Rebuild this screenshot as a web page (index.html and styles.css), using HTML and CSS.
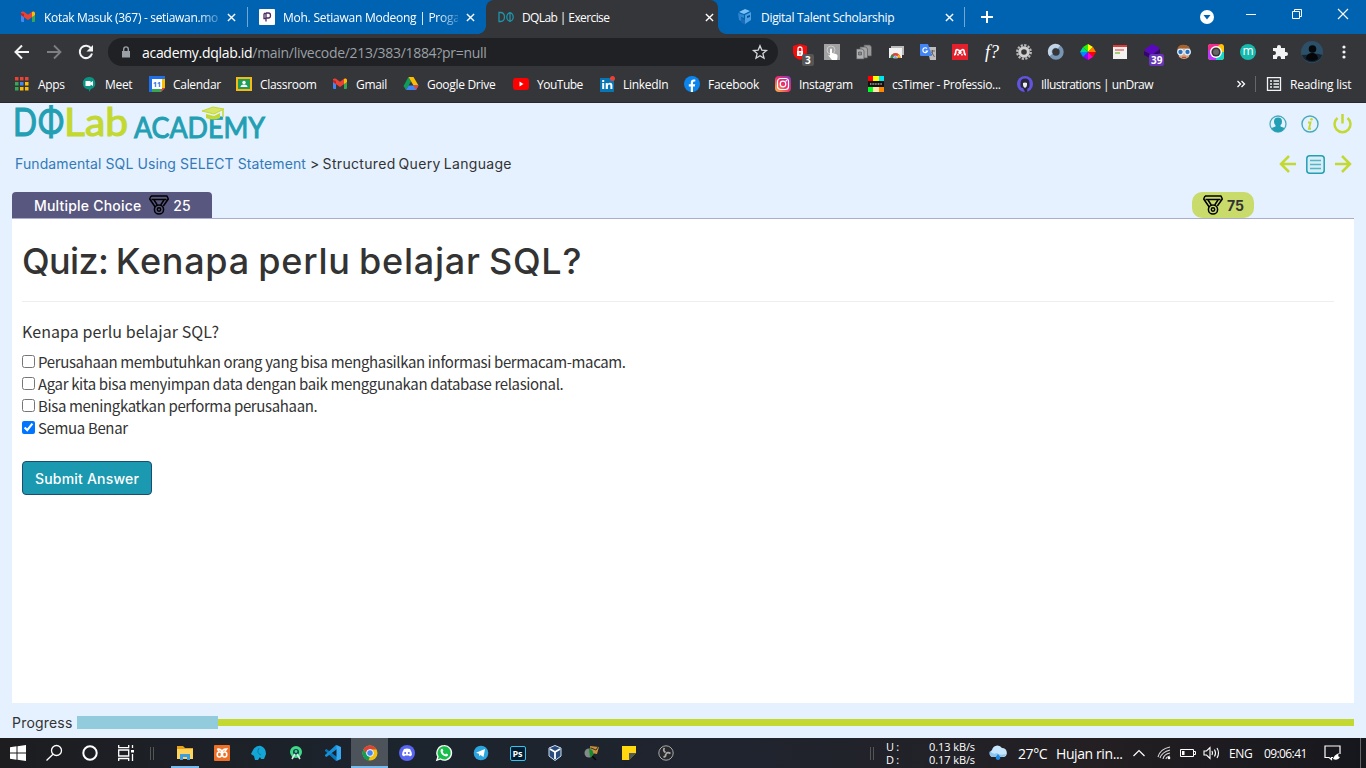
FILE: index.html
```
<!DOCTYPE html>
<html lang="id">
<head>
<meta charset="utf-8">
<title>DQLab | Exercise</title>
<link rel="stylesheet" href="styles.css">
</head>
<body>
<header class="browser">
  <div class="tabs">
    <div class="tab tab-mail">
      <svg class="ico" viewBox="0 0 16 16"><path d="M1 3h3v10H2a1 1 0 0 1-1-1z" fill="#4285f4"/><path d="M12 3h3v9a1 1 0 0 1-1 1h-2z" fill="#34a853"/><path d="M1 4a2 2 0 0 1 3-1.3l4 3.1 4-3.1A2 2 0 0 1 15 4v2L8 11 1 6z" fill="#ea4335"/><path d="M12 3a2 2 0 0 1 3 1v2l-3 2z" fill="#fbbc04"/><path d="M1 4l3 1v3L1 6z" fill="#c5221f"/></svg>
      <span class="tab-title fade t1">Kotak Masuk (367) - setiawan.mo</span>
      <svg class="x" viewBox="0 0 10 10"><path d="M1 1l8 8M9 1L1 9"/></svg>
    </div>
    <div class="tab tab-prog">
      <svg class="ico" viewBox="0 0 16 16"><rect width="16" height="16" rx="1" fill="#fff"/><path d="M5 4.500v5h2M5 4.500l2 0v8M7 4h2.500q2 0 2 2.500t-2 2.500H7" fill="none" stroke="#4b2a63" stroke-width="1.300"/></svg>
      <span class="tab-title fade t2">Moh. Setiawan Modeong | Proga</span>
      <svg class="x" viewBox="0 0 10 10"><path d="M1 1l8 8M9 1L1 9"/></svg>
    </div>
    <div class="tab tab-active">
      <svg class="ico" viewBox="0 0 16 16" fill="none" stroke="#1f93a7" stroke-width="1.300"><path d="M1 3.500h1.500q4 0 4 4.500t-4 4.500H1z"/><ellipse cx="12" cy="8" rx="3.200" ry="4"/><path d="M12 3v10"/></svg>
      <span class="tab-title t3">DQLab | Exercise</span>
      <svg class="x" viewBox="0 0 10 10"><path d="M1 1l8 8M9 1L1 9"/></svg>
    </div>
    <div class="tab tab-dts">
      <svg class="ico" viewBox="0 0 16 16"><path d="M2 3l6-3 5 2-6 3z" fill="#7fc0f2"/><path d="M1 4l6 2v3L4 8v4L2 11z" fill="#2e86d1"/><path d="M8 6l6-3v8l-6 4z" fill="#4ba0e4"/><path d="M10 7l3-1v2l-3 1z" fill="#0c4f96"/><path d="M4 9l4 2v5l-4-3z" fill="#1b6bb6"/></svg>
      <span class="tab-title">Digital Talent Scholarship</span>
      <svg class="x" viewBox="0 0 10 10"><path d="M1 1l8 8M9 1L1 9"/></svg>
    </div>
    <svg class="plus" viewBox="0 0 12 12"><path d="M6 0v12M0 6h12" stroke="#fff" stroke-width="2"/></svg>
    <div class="window-buttons">
      <svg class="media" width="14" height="14" viewBox="0 0 14 14"><circle cx="7" cy="7" r="7" fill="#fff"/><path d="M3.500 5h7L7 9.500z" fill="#0063b1"/></svg>
      <svg width="10" height="10" viewBox="0 0 10 10"><path d="M0 5.500h10" stroke="#fff"/></svg>
      <svg width="10" height="10" viewBox="0 0 10 10" fill="none" stroke="#fff"><path d="M.5 2.500h7v7h-7zM2.500 2.500v-2h7v7h-2"/></svg>
      <svg width="10" height="10" viewBox="0 0 10 10"><path d="M0 0l10 10M10 0L0 10" stroke="#fff" stroke-width="1.100"/></svg>
    </div>
  </div>

  <div class="toolbar">
    <div class="nav">
      <svg viewBox="0 0 16 16"><path d="M15 8H2M8 1.500L1.500 8 8 14.500" fill="none" stroke="#f1f3f4" stroke-width="2"/></svg>
      <svg viewBox="0 0 16 16"><path d="M1 8h13M8 1.500L14.500 8 8 14.500" fill="none" stroke="#7d7f83" stroke-width="1.800"/></svg>
      <svg viewBox="0 0 16 16"><path d="M13.200 4.500A6.200 6.200 0 1 0 14 9.500" fill="none" stroke="#f1f3f4" stroke-width="2"/><path d="M15 1v6.500H8.500z" fill="#f1f3f4"/></svg>
    </div>
    <div class="address">
      <svg class="lock" viewBox="0 0 10 12"><path d="M1 5h8v6.500H1z" fill="#9aa0a6"/><path d="M2.700 5V3.200a2.300 2.300 0 0 1 4.600 0V5" fill="none" stroke="#9aa0a6" stroke-width="1.400"/></svg>
      <span class="url"><span class="host">academy.dqlab.id</span><span class="path">/main/livecode/213/383/1884?pr=null</span></span>
      <svg class="star" viewBox="0 0 16 16"><path d="M8 1.800l1.800 4.300 4.700.4-3.600 3.100 1.100 4.600L8 11.700l-4 2.500 1.100-4.600L1.500 6.500l4.700-.4z" fill="none" stroke="#d5d7da" stroke-width="1.300"/></svg>
    </div>
    <div class="extensions">
      <div class="ext"><svg viewBox="0 0 16 16"><path d="M8 0l7 2v6q0 5-7 8Q1 13 1 8V2z" fill="#f20d0d"/><path d="M5 7h6v5H5z" fill="#fff"/><path d="M6 7V5a2 2 0 0 1 4 0v2" fill="none" stroke="#fff" stroke-width="1.300"/><path d="M8 8.500v2" stroke="#f20d0d"/></svg><b class="badge gray">3</b></div>
      <div class="ext"><svg viewBox="0 0 16 16"><path d="M0 0h16v16H0z" fill="#a3a3a3"/><circle cx="7" cy="6" r="4" fill="none" stroke="#ccc"/><path d="M6 5q1-1 2 0v4l4 1q2 .5 1.500 3L13 16H8l-4-5 2 .5z" fill="#fff"/></svg></div>
      <div class="ext"><svg viewBox="0 0 16 16" stroke="#55575a" stroke-width=".7"><path d="M8 1h6l1.500 2v9H8z" fill="#999"/><path d="M4 3h6l1.500 2v9H4z" fill="#a6a6a6"/><path d="M.5 5h6L8 7v8H.5z" fill="#b0b0b0"/><path d="M2.500 8h3v3h-3z" fill="#888"/></svg></div>
      <div class="ext"><svg viewBox="0 0 16 16"><path d="M3 2h13v9H3z" fill="#bbb"/><path d="M1 4h13v10H1z" fill="#f3f3f3"/><path d="M2.500 14a5 5 0 0 1 10 0z" fill="#db4437"/><path d="M2.500 14a5 5 0 0 1 1.500-3.500L7 13z" fill="#0f9d58"/><path d="M8 13l3-2.500q1.500 1.500 1.500 3.500z" fill="#f4b400"/><path d="M5.500 14a2 2 0 0 1 4 0z" fill="#4285f4" stroke="#fff" stroke-width=".6"/></svg></div>
      <div class="ext"><svg viewBox="0 0 16 16"><path d="M7 3h9v13h-6z" fill="#bdbdbd"/><path d="M0 0h8l4 12H1q-1 0-1-1z" fill="#4285f4"/><path d="M7 4.500A2.400 2.400 0 1 0 7.500 7H5.500" fill="none" stroke="#fff" stroke-width="1.200"/><path d="M10.500 7H15M12.500 6v1q0 3-1 4M11.500 8l3 5" fill="none" stroke="#666"/></svg></div>
      <div class="ext"><svg viewBox="0 0 16 16"><path d="M0 0h16v16H0z" fill="#e4202c"/><path d="M2 10.700q1.700 0 1.700-2.500 0-3 2-2.500T8 8q.5-1.800 2.300-2.300t2 2.500q0 2.500 1.700 2.500" fill="none" stroke="#fff" stroke-width="1.700"/><circle cx="8" cy="8.500" r="1.700" fill="#fff"/><circle cx="6" cy="10.700" r=".9" fill="#fff"/><circle cx="10" cy="10.700" r=".9" fill="#fff"/></svg></div>
      <div class="ext fq">f?</div>
      <div class="ext"><svg viewBox="0 0 16 16"><circle cx="8" cy="8" r="6.800" fill="none" stroke="#bababa" stroke-width="2.200" stroke-dasharray="2.200 1.360"/><circle cx="8" cy="8" r="4.300" fill="none" stroke="#d0d0d0" stroke-width="3"/></svg></div>
      <div class="ext"><svg viewBox="0 0 16 16" fill="none" stroke-width="4"><circle cx="8" cy="8" r="5.700" stroke="#7796b5"/><path d="M3 11a5.700 5.700 0 0 1 8-8" stroke="#c1d5e7"/></svg></div>
      <div class="ext"><svg viewBox="0 0 16 16"><path d="M8 8V0l5 3z" fill="#ff0"/><path d="M8 8l5-5 3 5z" fill="#ff7b00"/><path d="M8 8h8l-3 5z" fill="red"/><path d="M8 8l5 5-5 3z" fill="#f0c"/><path d="M8 8v8l-5-3z" fill="#80f"/><path d="M8 8l-5 5-3-5z" fill="#08f"/><path d="M8 8H0l3-5z" fill="#00d998"/><path d="M8 8L3 3l5-3z" fill="#30ed00"/></svg></div>
      <div class="ext"><svg viewBox="0 0 16 16"><path d="M1 1h14v14H1z" fill="#f4f2f0"/><path d="M1 1h14v2H1z" fill="#e53935"/><path d="M3 6h9" stroke="#e57373" stroke-width="1.500"/><path d="M3 9h5" stroke="#8bc34a" stroke-width="1.500"/></svg></div>
      <div class="ext"><svg viewBox="0 0 16 16"><path d="M0 6l8-6 8 4-8 7z" fill="#5a08bd"/><path d="M0 7l8 4 8-6v4l-8 6-8-4z" fill="#360377"/></svg><b class="badge violet">39</b></div>
      <div class="ext"><svg viewBox="0 0 16 16"><path d="M2 7q0-6 6-6t6 6l-1 6q-5 4-10 0z" fill="#d7a47a"/><path d="M1 6q1-6 8-5 5 1 5 5L8 4z" fill="#a6622d"/><circle cx="4.500" cy="8" r="2.800" fill="#2b6fb5" stroke="#def" stroke-width="1.300"/><circle cx="11.500" cy="8" r="2.800" fill="#2b6fb5" stroke="#def" stroke-width="1.300"/><path d="M6 13.300h4" stroke="#a33"/></svg></div>
      <div class="ext"><svg viewBox="0 0 16 16"><rect width="16" height="16" rx="3" fill="#ffc400"/><path d="M0 8V3a3 3 0 0 1 3-3h10z" fill="#f12a8d"/><path d="M0 6l8 2v8H3a3 3 0 0 1-3-3z" fill="#bd38ff"/><path d="M8 8h8v5a3 3 0 0 1-3 3H8z" fill="#19d4c9"/><circle cx="8" cy="8" r="6" fill="#fff"/><circle cx="8" cy="8" r="4.600" fill="#333"/><circle cx="8" cy="8" r="3" fill="#666"/></svg></div>
      <div class="ext"><span class="round-m">m</span></div>
      <div class="ext"><svg viewBox="0 0 16 16"><path d="M1 4h4V3a2 2 0 0 1 4 0v1h4v4h1a2 2 0 0 1 0 4h-1v3H9v-1a2 2 0 0 0-4 0v1H1v-4h1a2 2 0 0 0 0-4H1z" fill="#f1f3f4"/></svg></div>
      <div class="ext"><svg class="avatar" viewBox="0 0 22 22"><circle cx="11" cy="11" r="11" fill="#2b5068"/><path d="M.7 14a11 11 0 0 0 20.600 0q-5-2-10-1-6 1-10.600 1z" fill="#152533"/><circle cx="11.500" cy="8" r="3.800" fill="#06090c"/><path d="M5 18q0-5 5-6h3q4 2 4 6-6 4-12 0z" fill="#05070a"/></svg></div>
      <div class="ext"><svg viewBox="0 0 16 16" fill="#f1f3f4"><circle cx="8" cy="3" r="1.600"/><circle cx="8" cy="8" r="1.600"/><circle cx="8" cy="13" r="1.600"/></svg></div>
    </div>
  </div>

  <div class="bookmarks">
    <div class="bm"><svg class="ico" viewBox="0 0 16 16"><path d="M1 1h3.500v3.500H1zM6 1h3.500v3.500H6zM11 1h3.500v3.500H11z" fill="#ea4335"/><path d="M1 6h3.500v3.500H1z" fill="#34a853"/><path d="M6 6h3.500v3.500H6z" fill="#4285f4"/><path d="M11 6h3.500v3.500H11zM6 11h3.500v3.500H6zM11 11h3.500v3.500H11z" fill="#fbbc04"/><path d="M1 11h3.500v3.500H1z" fill="#34a853"/></svg><span>Apps</span></div>
    <div class="bm"><svg class="ico" viewBox="0 0 16 16"><path d="M8 1a6.200 6.200 0 0 1 2 12.100L8 16v-2.500A6.200 6.200 0 0 1 8 1z" fill="#0a9484"/><path d="M4.500 5h5v1.500L12 5v5L9.500 8.500V10h-5z" fill="#fff"/></svg><span>Meet</span></div>
    <div class="bm"><svg class="ico" viewBox="0 0 16 16"><path d="M0 0h16v12l-4 4H0z" fill="#1e6fe8"/><path d="M13 3h3v9h-3z" fill="#fbbc04"/><path d="M3 13h9v3H3z" fill="#34a853"/><path d="M12 12h4l-4 4z" fill="#ea4335"/><path d="M3 3h10v10H3z" fill="#fff"/><text x="8" y="10.800" class="tiny-date">11</text></svg><span>Calendar</span></div>
    <div class="bm"><svg class="ico" viewBox="0 0 16 16"><path d="M0 1h16v14H0z" fill="#f5ba15"/><path d="M2 3h12v10H2z" fill="#1f9d58"/><circle cx="8" cy="6.500" r="1.700" fill="#fff"/><path d="M4.500 11q0-2.500 3.500-2.500t3.500 2.500z" fill="#fff"/></svg><span>Classroom</span></div>
    <div class="bm"><svg class="ico" viewBox="0 0 16 16"><path d="M1 3h3v10H2a1 1 0 0 1-1-1z" fill="#4285f4"/><path d="M12 3h3v9a1 1 0 0 1-1 1h-2z" fill="#34a853"/><path d="M1 4a2 2 0 0 1 3-1.300l4 3.100 4-3.100A2 2 0 0 1 15 4v2L8 11 1 6z" fill="#ea4335"/><path d="M12 3a2 2 0 0 1 3 1v2l-3 2z" fill="#fbbc04"/><path d="M1 4l3 1v3L1 6z" fill="#c5221f"/></svg><span>Gmail</span></div>
    <div class="bm"><svg class="ico" viewBox="0 0 16 16"><path d="M5.500 1L8 5.500 3 14 .5 10z" fill="#0f9d58"/><path d="M5.500 1h5l5 8.500h-5z" fill="#fbbc04"/><path d="M5.500 9.500h10L13 14H3z" fill="#4285f4"/><path d="M10.500 9.500h5L13 14z" fill="#ea4335"/></svg><span>Google Drive</span></div>
    <div class="bm tight"><svg class="ico" viewBox="0 0 16 16"><rect y="2" width="16" height="12" rx="3" fill="red"/><path d="M6.500 5.500v5l4-2.500z" fill="#fff"/></svg><span>YouTube</span></div>
    <div class="bm"><svg class="ico" viewBox="0 0 16 16"><path d="M1 2h14v14H1z" fill="#0876b4"/><path d="M3.200 7h2v6h-2zM3.200 4h2v2h-2zM6.700 7h2v1q1-1.200 2.400-1.200 2.300 0 2.300 2.700V13h-2V9.800q0-1.200-1.200-1.200t-1.300 1.300V13H6.700z" fill="#fff"/><circle cx="13.500" cy="2.500" r="2.500" fill="#e94235"/></svg><span>LinkedIn</span></div>
    <div class="bm"><svg class="ico" viewBox="0 0 16 16"><circle cx="8" cy="8" r="8" fill="#0b84ee"/><path d="M6.800 16v-5.500h-2V8.200h2V6.500q0-3 3-3h1.500v2h-1q-1.300 0-1.300 1.200v1.500h2.200l-.4 2.300H9V16z" fill="#fff"/></svg><span>Facebook</span></div>
    <div class="bm"><svg class="ico" viewBox="0 0 16 16"><defs><linearGradient id="ig" x1="0" y1="1" x2="1" y2="0"><stop offset="0" stop-color="#fdbf45"/><stop offset=".5" stop-color="#ed2e68"/><stop offset="1" stop-color="#8438c4"/></linearGradient></defs><rect width="16" height="16" rx="4" fill="url(#ig)"/><g fill="none" stroke="#fff" stroke-width="1.200"><rect x="2.500" y="2.500" width="11" height="11" rx="3"/><circle cx="8" cy="8" r="2.800"/></g><circle cx="11.300" cy="4.700" r=".8" fill="#fff"/></svg><span>Instagram</span></div>
    <div class="bm"><svg class="ico" viewBox="0 0 16 16"><path d="M0 0h5v5H0z" fill="red"/><path d="M5 0h6v5H5z" fill="#ff0"/><path d="M11 0h5v5h-5z" fill="#00e5ee"/><path d="M0 5h16v6H0z" fill="#111"/><path d="M2 8h12" stroke="#aaa" stroke-width="1.500" stroke-dasharray="1 .6"/><path d="M0 11h5v5H0z" fill="#0f2"/><path d="M5 11h6v5H5z" fill="#ffe5b0"/><path d="M11 11h5v5h-5z" fill="#f80"/></svg><span>csTimer - Professio...</span></div>
    <div class="bm tight"><svg class="ico" viewBox="0 0 16 16"><circle cx="8" cy="8" r="8" fill="#6254de"/><path d="M3.500 10V7q0-4.500 4.500-4.500T12.500 7v3q0 2-2 2.500L10 16H8l-2-4q-2.500 0-2.500-2z" fill="#292739"/><path d="M6 7q2-1 4 0v2q0 2-2 3Q6 11 6 9z" fill="#eee"/></svg><span>Illustrations | unDraw</span></div>
    <div class="bm-more"><svg width="8" height="8" viewBox="0 0 8 8"><path d="M.5 1l3 3-3 3M4.500 1l3 3-3 3" fill="none" stroke="#fff" stroke-width="1.300"/></svg></div>
    <div class="bm reading"><svg class="ico" viewBox="0 0 16 16" fill="none" stroke="#f1f3f4" stroke-width="1.300"><path d="M1.500 1.700h13v12.600h-13z"/><path d="M4 5h2M4 8h2M4 11h2M7.500 5H13M7.500 8H13M7.500 11H13" stroke-width="1.600"/></svg><span>Reading list</span></div>
  </div>
</header>

<main class="page">
  <div class="brand-row">
    <svg class="logo" width="254" height="36" viewBox="0 0 254 36">
      <text class="logo-big teal" x="-2" y="31" textLength="24" lengthAdjust="spacingAndGlyphs">D</text>
      <text class="logo-big teal" x="23" y="31" textLength="26" lengthAdjust="spacingAndGlyphs">Φ</text>
      <text class="logo-big lime" x="49" y="31" textLength="64" lengthAdjust="spacingAndGlyphs">Lab</text>
      <text class="logo-small teal" x="119" y="33" textLength="131" lengthAdjust="spacingAndGlyphs">ACADEMY</text>
      <path d="M187 6l11-4 11 2-10 5z" fill="#d6e565" stroke="#c3d932"/><path d="M191 9v4q7 3 14 0V8l-6 3z" fill="#c3d932"/><path d="M208 5v7" stroke="#c3d932" stroke-width="1.500"/>
    </svg>
    <div class="user-icons">
      <svg width="18" height="18" viewBox="0 0 18 18"><circle cx="9" cy="9" r="8" fill="none" stroke="#47aabb" stroke-width="1.300"/><path d="M9 2.500q4 0 4 4.200 0 2-1.500 3.600v1.200l4 1.500q-2 4-6.500 4t-6.500-4l4-1.500v-1.200Q5 8.700 5 6.700 5 2.500 9 2.500z" fill="#239fb3"/></svg>
      <svg width="18" height="18" viewBox="0 0 18 18"><circle cx="9" cy="9" r="8" fill="none" stroke="#47aabb" stroke-width="1.400"/><path d="M7 7.500h2.500L8 13.800h2" fill="none" stroke="#c3d932" stroke-width="1.900"/><circle cx="10.500" cy="4.200" r="1.300" fill="#c3d932"/></svg>
      <svg width="19" height="20" viewBox="0 0 19 20" fill="none" stroke="#c3d932" stroke-width="2.500"><path d="M4.500 4a8 8 0 1 0 10 0M9.500 0v9.500"/></svg>
    </div>
  </div>
  <div class="crumb-row">
    <div class="crumb"><a>Fundamental SQL Using SELECT Statement</a><span class="here">&gt; Structured Query Language</span></div>
    <div class="pager">
      <svg width="17" height="18" viewBox="0 0 17 18"><path d="M17 9H2M10 1L2 9l8 8" fill="none" stroke="#c3d932" stroke-width="2.500"/></svg>
      <svg width="19" height="19" viewBox="0 0 19 19"><rect x=".8" y=".8" width="17.400" height="17.400" rx="3" fill="#d7eef6" stroke="#239fb3" stroke-width="1.500"/><path d="M4 5.500h11M4 9.500h11M4 13.500h11" stroke="#58b4c5" stroke-width="1.500"/></svg>
      <svg width="17" height="18" viewBox="0 0 17 18"><path d="M0 9h15M7 1l8 8-8 8" fill="none" stroke="#c3d932" stroke-width="2.500"/></svg>
    </div>
  </div>
  <div class="quiz-tabs">
    <div class="quiz-kind"><span class="kind-name">Multiple Choice</span><svg class="medal" viewBox="0 0 20 20"><g fill="none" stroke="#000" stroke-width="1.500" stroke-linejoin="round"><path d="M2 1h16l1.300 3-5 7M2 1L.7 4l5.500 8M2.500 4.500h15M5 5l3.300 5M15 5l-3.300 5"/><circle cx="10" cy="14.500" r="4.600"/><circle cx="10" cy="14.500" r="1.700"/></g></svg><span class="points">25</span></div>
    <div class="score"><svg class="medal" viewBox="0 0 20 20"><g fill="none" stroke="#000" stroke-width="1.500" stroke-linejoin="round"><path d="M2 1h16l1.300 3-5 7M2 1L.7 4l5.500 8M2.500 4.500h15M5 5l3.300 5M15 5l-3.300 5"/><circle cx="10" cy="14.500" r="4.600"/><circle cx="10" cy="14.500" r="1.700"/></g></svg><b>75</b></div>
  </div>
  <section class="card">
    <h1><span class="lead">Quiz:</span> Kenapa perlu belajar SQL?</h1>
    <p class="question">Kenapa perlu belajar SQL?</p>
    <label><input type="checkbox"><span>Perusahaan membutuhkan orang yang bisa menghasilkan informasi bermacam-macam.</span></label>
    <label><input type="checkbox"><span>Agar kita bisa menyimpan data dengan baik menggunakan database relasional.</span></label>
    <label><input type="checkbox"><span>Bisa meningkatkan performa perusahaan.</span></label>
    <label><input type="checkbox" checked><span>Semua Benar</span></label>
    <button class="submit">Submit Answer</button>
  </section>
  <div class="progress"><span class="progress-name">Progress</span><div class="track"><i class="done"></i><i class="rest"></i></div></div>
</main>

<footer class="taskbar">
  <div class="start">
    <svg viewBox="0 0 16 16" fill="#fff"><path d="M0 2.200L6.500 1.300V7.500H0zM7.500 1.200L16 0v7.500H7.500zM0 8.500h6.500v6.200L0 13.800zM7.500 8.500H16V16l-8.500-1.200z"/></svg>
    <svg viewBox="0 0 16 16" fill="none" stroke="#fff" stroke-width="1.300"><circle cx="10.500" cy="5.500" r="5"/><path d="M7 9.200L.5 15.500"/></svg>
    <svg viewBox="0 0 16 16" fill="none" stroke="#fff" stroke-width="2"><circle cx="8" cy="8" r="6.700"/></svg>
    <svg viewBox="0 0 16 16" fill="none" stroke="#fff" stroke-width="1.300"><path d="M.7 0v2.600h10V0M.7 5h10v6H.7zM.7 16v-2.500h10V16M14.500 0v3M14.500 9v7"/><path d="M13 5h3v2.500h-3z" fill="#fff" stroke="none"/></svg>
  </div>
  <i class="grip"></i>
  <div class="apps">
    <div class="app open"><svg viewBox="0 0 16 16"><path d="M0 1h6l2 2h8v11H0z" fill="#e9a11b"/><path d="M0 4h16v10H0z" fill="#ffd45c"/><path d="M3 15V9h10v6h-3v-3H6v3z" fill="#3d9ddf"/></svg></div>
    <div class="app"><svg viewBox="0 0 16 16"><rect width="16" height="16" rx="1" fill="#ed7026"/><g fill="none" stroke="#fff" stroke-width="1.600"><rect x="3.300" y="7" width="4.200" height="5" rx="2"/><rect x="8.500" y="7" width="4.200" height="5" rx="2"/><path d="M3.300 4q4.700-.5 4.700 4.500Q8 3.500 12.700 4l-2 2.500M3.300 4l2 2.500"/></g></svg></div>
    <div class="app"><svg viewBox="0 0 16 16"><path d="M2 5q3-5 8-4 5 2 5 8l-2 5h-3l-1-2-2 3H4l-1-4-3-2z" fill="#14a5d7"/><path d="M8 3q-3 5 2 7" stroke="#087ba4" fill="none"/></svg></div>
    <div class="app"><svg viewBox="0 0 16 16"><circle cx="8" cy="7" r="6" fill="#3ddc84"/><circle cx="8" cy="7" r="3" fill="#173b55"/><path d="M7 9l-3 5M9 9l3 5" stroke="#dce8e7" stroke-width="1.600"/><circle cx="8" cy="6.500" r="1.400" fill="#3ddc84"/></svg></div>
    <div class="app"><svg viewBox="0 0 16 16"><path d="M0 5l1.500-1L12 12v3.500L11 16 0 6z" fill="#0877bd"/><path d="M0 11l1.500 1L12 4V.5L11 0 0 10z" fill="#1591da"/><path d="M11.500 0L16 2v12l-4.500 2z" fill="#35aaf3"/></svg></div>
    <div class="app open current"><svg viewBox="0 0 16 16"><circle cx="8" cy="8" r="7.500" fill="#f4c20d"/><path d="M1.500 4.300A7.500 7.500 0 0 1 14.600 4.500H8L5 10z" fill="#db4437"/><path d="M1.500 4.300L5 10l3 1.500-1.500 4A7.500 7.500 0 0 1 1.500 4.300z" fill="#0f9d58"/><circle cx="8" cy="8" r="3.400" fill="#4285f4" stroke="#fff"/></svg></div>
    <div class="app"><svg viewBox="0 0 16 16"><circle cx="8" cy="8" r="8" fill="#5865f2"/><path d="M5 4q3-1 6 0 2 3 2 6l-2 1.500-1-1H6l-1 1L3 10q0-3 2-6z" fill="#fff"/><circle cx="6.200" cy="8" r="1" fill="#5865f2"/><circle cx="9.800" cy="8" r="1" fill="#5865f2"/></svg></div>
    <div class="app"><svg viewBox="0 0 16 16"><path d="M8 .7A7.200 7.200 0 1 1 4.500 14L.8 15.300 2 11.700A7.200 7.200 0 0 1 8 .7z" fill="#18bd4b" stroke="#fff" stroke-width="1.300"/><path d="M5 4l1.500-.2.900 2-.8 1q1 2 2.500 2.600l1-1 2 1q0 2-2 2Q5 10.500 4.500 6z" fill="#fff"/></svg></div>
    <div class="app"><svg viewBox="0 0 16 16"><circle cx="8" cy="8" r="7.300" fill="#2ca5df"/><path d="M3 7.800l9-3.800-1.500 8-3-2-1.200 1.300-.3-2.500z" fill="#fff"/></svg></div>
    <div class="app"><span class="ps">Ps</span></div>
    <div class="app"><svg viewBox="0 0 16 16"><path d="M2 3l6-2.500L14 3v8l-6 4.500L2 11z" fill="#284a7c" stroke="#cce2f4"/><path d="M3 4l5 3 5-3M8 7v7" fill="none" stroke="#fff" stroke-width="1.800"/></svg></div>
    <div class="app"><svg viewBox="0 0 16 16"><path d="M6 1l9 1-2 7-6-1z" fill="#c7913e"/><path d="M7 3l5 2 2-3" stroke="#402e17" fill="none"/><circle cx="5" cy="8" r="4.500" fill="#828b87"/><path d="M5 4q5 0 4 7l-3 1z" fill="#168c2a"/><path d="M8 11l4 4" stroke="#050505" stroke-width="1.500"/></svg></div>
    <div class="app"><svg viewBox="0 0 16 16"><path d="M1 1h14v14H1z" fill="#ffd80f"/><path d="M8 15V8h7z" fill="#51585d"/><path d="M8 15l7-7v7z" fill="#20252a"/></svg></div>
    <div class="app"><svg viewBox="0 0 16 16" fill="none"><circle cx="8" cy="8" r="7.200" fill="#28292c" stroke="#aaa"/><path d="M6.500 3q-2 2.500 1 4.500M12.500 8.500q-3-2-4.500.5M5.500 12q3-.5 2-3" stroke="#aaa" stroke-width="1.800"/></svg></div>
  </div>
  <div class="tray">
    <i class="grip"></i>
    <div class="net"><span>U :</span><span class="rate">0.13 kB/s</span><span>D :</span><span class="rate">0.17 kB/s</span></div>
    <svg class="cloud" viewBox="0 0 20 16"><path d="M4 12a4 4 0 0 1 0-7 5.500 5.500 0 0 1 10-2 4.700 4.700 0 0 1 2 9z" fill="#c7e6fb"/><path d="M4 12a4 4 0 0 1-2-6q3 4 7 2 2 3 9 1-1 3-4 3z" fill="#8ec5ee"/><path d="M10 9q3 3 2 5-2 2-4 0-1-2 2-5z" fill="#2089df"/></svg>
    <span class="temp">27°C</span>
    <span class="weather">Hujan rin...</span>
    <svg class="chev" viewBox="0 0 12 8"><path d="M.5 7L6 1.500 11.500 7" fill="none" stroke="#fff" stroke-width="1.200"/></svg>
    <svg class="wifi" viewBox="0 0 14 14" fill="none" stroke="#ddd" stroke-width="1.100"><path d="M1 11Q3 3 13 1M3 12Q5 6 13 4M6 13q1-5 7-6M9 13q0-2 4-3"/><circle cx="12" cy="12" r="1.300" fill="#fff" stroke="none"/></svg>
    <svg class="battery" viewBox="0 0 16 10"><path d="M.5 1.500h13v7H.5zM14 3.500h1.500v3H14" fill="none" stroke="#fff"/><path d="M2 3h2.500v4H2z" fill="#fff"/></svg>
    <svg class="sound" viewBox="0 0 18 14" fill="none" stroke="#fff" stroke-width="1.100"><path d="M1 5h2.500L7 1.500v11L3.500 9H1zM9 5q1 2 0 4M11.500 3.500q2 3.500 0 7M14 2q3 5 0 10"/></svg>
    <span class="lang">ENG</span>
    <span class="clock">09:06:41</span>
    <svg class="notice" viewBox="0 0 18 16" fill="none" stroke="#fff" stroke-width="1.200"><path d="M9 12.500H7.500v2L5 12.500H1V1h15v8"/><path d="M9 14q1-4 6-6-2 4 1 4-2 4-7 2z" fill="#fff" stroke="none"/></svg>
    <i class="edge"></i>
  </div>
</footer>
</body>
</html>
```
FILE: styles.css
```
* { box-sizing: border-box; }
body { margin: 0; width: 1366px; height: 768px; overflow: hidden; display: flex; flex-direction: column; background: #e5f1ff; font-family: "Open Sans", "Noto Sans", sans-serif; font-size: 12px; }
svg { display: block; flex: none; overflow: visible; }
span { white-space: nowrap; }

/* Browser frame */
.browser { height: 103px; flex: none; background: #35363a; border-bottom: 1px solid #28292c; color: #fff; letter-spacing: -0.3px; }
.ico { width: 16px; height: 16px; }
.tabs { height: 34px; background: #0063b1; display: flex; align-items: center; }
.tab { height: 34px; display: flex; align-items: center; gap: 8px; flex: none; }
.tab-title { flex: 1; min-width: 0; }
.fade { mask-image: linear-gradient(to right, #000 88%, transparent 104%); }
.t1 { letter-spacing: -0.32px; }
.t2 { letter-spacing: -0.25px; }
.t3 { letter-spacing: -0.6px; }
.x { width: 9px; height: 9px; }
.x path { stroke: #fff; stroke-width: 1.5; }
.tab-mail { width: 247px; padding: 0 11px 0 20px; }
.tab-prog { width: 239px; padding: 0 11px 0 12px; position: relative; }
.tab-prog::before { content: ""; position: absolute; left: 0; top: 7px; width: 1px; height: 20px; background: #70a8d5; }
.tab-active { width: 232px; padding: 0 4px 0 12px; background: #35363a; border-radius: 8px 8px 0 0; position: relative; }
.tab-active::before, .tab-active::after { content: ""; position: absolute; bottom: 0; width: 8px; height: 8px; }
.tab-active::before { left: -8px; background: radial-gradient(circle at 0 0, transparent 7.5px, #35363a 8px); }
.tab-active::after { right: -8px; background: radial-gradient(circle at 100% 0, transparent 7.5px, #35363a 8px); }
.tab-dts { width: 247px; padding: 0 11px 0 19px; position: relative; }
.tab-dts::after { content: ""; position: absolute; right: 0; top: 7px; width: 1px; height: 20px; background: #70a8d5; }
.plus { width: 12px; height: 12px; margin-left: 16px; }
.window-buttons { margin-left: auto; padding-right: 18px; display: flex; align-items: center; gap: 36px; height: 28px; align-self: flex-start; }
.media { margin: 5px -4px 0 0; }
.toolbar { height: 36px; display: flex; align-items: center; }
.nav { display: flex; gap: 16px; padding-left: 14px; width: 108px; }
.nav svg { width: 16px; height: 16px; }
.address { width: 670px; height: 28px; border-radius: 14px; background: #202124; display: flex; align-items: center; padding: 0 10px 0 13px; }
.lock { width: 10px; height: 12px; margin-right: 11px; }
.url { flex: 1; font-size: 14px; color: #9aa0a6; }
.host { color: #fff; }
.star { width: 16px; height: 16px; }
.extensions { display: grid; grid-template-columns: repeat(18, 32px); margin-left: 6px; }
.ext { position: relative; height: 32px; display: flex; align-items: center; justify-content: center; }
.ext svg { width: 16px; height: 16px; }
.ext .avatar { width: 22px; height: 22px; }
.badge { position: absolute; top: 18px; left: 18px; height: 12px; line-height: 12px; padding: 0 3px; border-radius: 2px; font-size: 10px; letter-spacing: 0; }
.gray { background: #555; }
.violet { background: #6735b5; left: 13px; padding: 0 2px; }
.fq { font: italic 18px "Liberation Serif", serif; letter-spacing: 0; }
.round-m { width: 16px; height: 16px; border-radius: 50%; background: #18b9ad; font-size: 12px; line-height: 14px; text-align: center; }
.bookmarks { height: 28px; display: grid; align-items: center; padding-left: 14px; grid-template-columns: 67px 68px 87px 96px 71px 110px 86px 85px 91px 93px 149px 220px 18px 110px; }
.bm { display: flex; align-items: center; gap: 8px; height: 28px; }
.tight { letter-spacing: -0.5px; }
.bm-more { justify-self: start; }
.reading { border-left: 1px solid #65676b; height: 16px; padding-left: 10px; letter-spacing: -0.25px; }
.tiny-date { font: bold 7px "Open Sans", sans-serif; fill: #1e6fe8; text-anchor: middle; letter-spacing: 0; }

/* Course page */
.page { height: 635px; flex: none; padding: 0 12px; font-family: Inter, "Open Sans", sans-serif; color: #333; }
.brand-row { height: 42px; display: flex; justify-content: space-between; padding: 2px 2px 0 3px; }
.logo-big { font: 400 39px/1 Lato, sans-serif; stroke-width: 1.2px; }
.logo-small { font: 400 28px/1 Lato, sans-serif; stroke-width: 1px; }
.teal { fill: #239fb3; stroke: #239fb3; }
.lime { fill: #c3d932; stroke: #c3d932; }
.user-icons { display: flex; align-items: center; gap: 14px; height: 38px; }
.crumb-row { height: 37px; display: flex; align-items: center; justify-content: space-between; padding: 0 2px 0 3px; }
.crumb { display: flex; gap: 4px; font-size: 14px; }
.crumb a { color: #337ab7; letter-spacing: 0.1px; }
.here { letter-spacing: 0.32px; word-spacing: -1.2px; }
.pager { display: flex; align-items: center; gap: 10px; padding-top: 1px; }
.quiz-tabs { margin-top: 10px; height: 27px; display: flex; justify-content: space-between; border-bottom: 1px solid #a9abcf; }
.quiz-kind { width: 200px; height: 26px; background: #58577f; border-radius: 4px 4px 0 0; color: #fff; display: flex; align-items: center; padding-left: 22px; font-size: 14px; font-weight: 500; }
.kind-name { letter-spacing: 0.2px; }
.medal { width: 20px; height: 20px; }
.quiz-kind .medal { margin: 0 4px 0 8px; }
.score { width: 62px; height: 26px; margin-right: 100px; border-radius: 10px; background: #c9db6b; display: flex; align-items: center; padding-left: 11px; gap: 4px; font-size: 14px; }
.card { height: 484px; background: #fff; padding: 23px 20px 0 10px; font-family: "Noto Sans CJK JP", "Open Sans", sans-serif; font-size: 15px; }
h1 { margin: 0 0 19px; height: 60px; border-bottom: 1px solid #eee; font: 500 36px/38px Inter, sans-serif; letter-spacing: 0.75px; word-spacing: -2px; }
.lead { letter-spacing: -0.6px; margin-right: -1px; }
.question { margin: 0 0 10px; height: 20px; line-height: 20px; font-size: 16px; letter-spacing: 0.06px; }
label { display: flex; align-items: center; height: 22px; gap: 3px; letter-spacing: -0.36px; }
label span { height: 22px; line-height: 22px; }
input { width: 13px; height: 13px; margin: 0 0 2px; }
.submit { margin-top: 22px; width: 130px; height: 34px; border: 1px solid #1b4d73; border-radius: 4px; background: #1a99b1; color: #fff; font: 500 14px Inter, sans-serif; letter-spacing: 0.2px; padding: 0; }
.progress { display: flex; align-items: center; height: 39px; font-size: 14px; }
.progress-name { width: 65px; letter-spacing: 0.2px; }
.track { flex: 1; display: flex; align-items: center; }
.done { width: 141px; height: 13px; background: #91cbdc; }
.rest { flex: 1; height: 7px; background: #c3d932; }

/* Taskbar */
.taskbar { height: 30px; flex: none; background: linear-gradient(90deg, #1d1d20, #1c242e 30%, #20242e 55%, #231f22 80%, #16171d); color: #fff; display: flex; align-items: center; }
.start { display: flex; gap: 20px; padding-left: 10px; }
.start svg { width: 16px; height: 16px; }
.grip { width: 4px; height: 13px; border: solid #555; border-width: 0 1px; }
.start + .grip { margin: 0 12px 0 16px; }
.apps { display: grid; grid-template-columns: repeat(14, 37px); }
.app { height: 30px; display: flex; align-items: center; justify-content: center; }
.app svg { width: 16px; height: 16px; }
.open { background: linear-gradient(#76b9ed, #76b9ed) center bottom / 28px 2px no-repeat; }
.current { background-color: #4d535b; background-size: 37px 2px; }
.ps { width: 16px; height: 15px; border: 1px solid #31c5f0; border-radius: 2px; background: #001d33; font: bold 9px/13px "Open Sans", sans-serif; text-align: center; }
.tray { margin-left: auto; height: 30px; display: flex; align-items: center; width: 496px; }
.net { display: grid; grid-template-columns: 25px 64px; line-height: 13px; font-size: 11px; margin-left: 12px; letter-spacing: -0.3px; }
.rate { text-align: right; letter-spacing: -0.1px; }
.cloud { width: 20px; height: 16px; margin-left: 13px; }
.temp { margin-left: 10px; width: 38px; font-size: 14px; letter-spacing: -0.4px; }
.weather { width: 77px; font-size: 14px; letter-spacing: -0.4px; }
.chev { width: 12px; height: 8px; }
.wifi { width: 14px; height: 14px; margin-left: 12px; }
.battery { width: 16px; height: 10px; margin-left: 9px; }
.sound { width: 18px; height: 14px; margin-left: 7px; }
.lang { width: 35px; margin-left: 8px; letter-spacing: -0.4px; }
.clock { width: 60px; letter-spacing: -0.6px; }
.notice { width: 18px; height: 16px; }
.edge { width: 1px; height: 30px; background: #656565; margin-left: 18px; }
```
